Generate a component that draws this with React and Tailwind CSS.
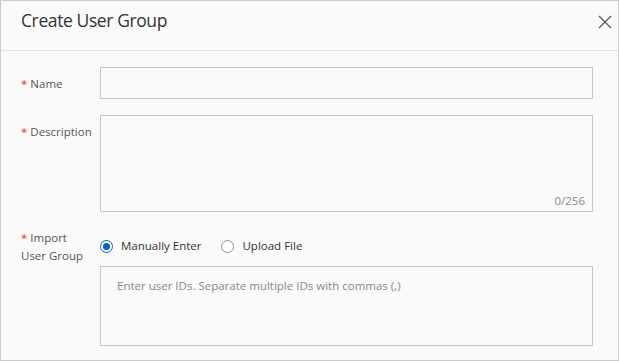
import React from "react";

const font = { fontFamily: '"Open Sans", "Noto Sans", sans-serif' };

function Radio({ checked, label }) {
  return (
    <label className="flex items-center gap-[8px]">
      <span
        className={
          "flex h-[13px] w-[13px] items-center justify-center rounded-full border bg-white " +
          (checked ? "border-[#0064c8]" : "border-[#8a9099]")
        }
      >
        {checked && <span className="h-[7px] w-[7px] rounded-full bg-[#0064c8]" />}
      </span>
      <span className="text-[11.5px] text-[#333]">{label}</span>
    </label>
  );
}

export default function App() {
  return (
    <div
      className="box-border flex h-[361px] w-[619px] flex-col border border-[#cbcbcb] bg-[#fafafa]"
      style={font}
    >
      <div className="flex h-[50px] shrink-0 items-start justify-between border-b border-[#e3e3e3] pl-[20px] pr-[6px]">
        <div className="mt-[7px] text-[17.5px] leading-[24px] tracking-[-0.4px] text-[#333]">
          Create User Group
        </div>
        <svg width="14" height="14" viewBox="0 0 14 14" className="mt-[14px]">
          <path d="M1 1 L13 13 M13 1 L1 13" stroke="#555" strokeWidth="1.2" fill="none" />
        </svg>
      </div>
      <div className="flex flex-col pl-[20px] pr-[25px] pt-[16px]">
        <div className="flex">
          <div className="w-[79px] shrink-0 pt-[1px] text-[11.5px] leading-[31px] text-[#555]">
            <span className="text-[#d93026]">*</span> Name
          </div>
          <div className="h-[32px] flex-1 border border-[#c4c8cc] bg-[#fafafa]" />
        </div>
        <div className="mt-[16px] flex">
          <div className="w-[79px] shrink-0 pt-[1px] text-[11.5px] leading-[31px] text-[#555]">
            <span className="text-[#d93026]">*</span> Description
          </div>
          <div className="relative h-[97px] flex-1 border border-[#c4c8cc] bg-[#fafafa]">
            <span className="absolute bottom-[2px] right-[7px] text-[11.5px] leading-[16px] text-[#888]">
              0/256
            </span>
          </div>
        </div>
        <div className="mt-[16px] flex">
          <div className="w-[79px] shrink-0 pt-[1px] text-[11.5px] leading-[18px] text-[#555]">
            <div>
              <span className="text-[#d93026]">*</span> Import
            </div>
            <div>User Group</div>
          </div>
          <div className="flex flex-1 flex-col">
            <div className="flex h-[34px] items-center gap-[20px] pt-[2px]">
              <Radio checked label="Manually Enter" />
              <Radio label="Upload File" />
            </div>
            <div className="mt-[4px] h-[80px] border border-[#c4c8cc] bg-[#fafafa] px-[16px] pt-[10px] text-[11.5px] text-[#888]">
              Enter user IDs. Separate multiple IDs with commas (,)
            </div>
          </div>
        </div>
      </div>
    </div>
  );
}
